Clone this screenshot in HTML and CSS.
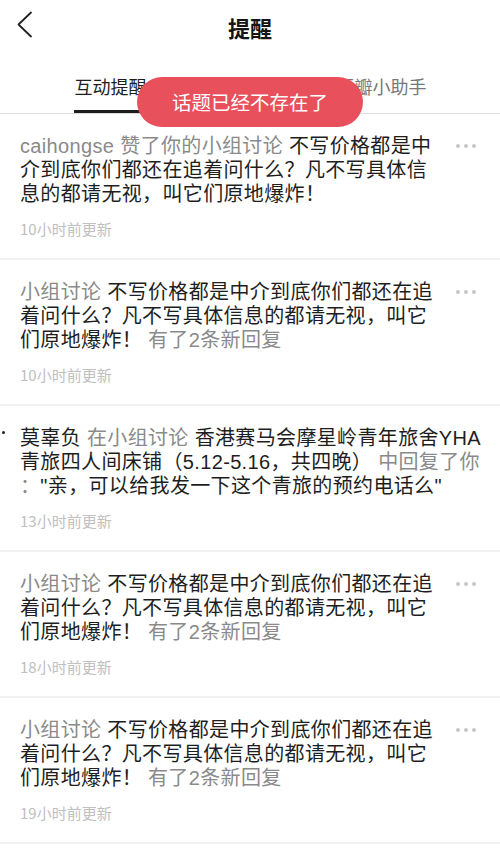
FILE: index.html
```html
<!DOCTYPE html>
<html lang="zh-CN">
<head>
<meta charset="utf-8">
<title>提醒</title>
<link rel="stylesheet" href="styles.css">
</head>
<body>
<div class="page">
  <header class="navbar">
    <span class="back">
      <svg width="18" height="28" viewBox="0 0 18 28"><path d="M15 1.5 L2.5 13.5 L15 25.5" fill="none" stroke="#222" stroke-width="1.8" stroke-linecap="round" stroke-linejoin="round"/></svg>
    </span>
    <h1 class="title">提醒</h1>
  </header>
  <nav class="tabs">
    <span class="tab active">互动提醒</span>
    <span class="tab">豆瓣小助手</span>
  </nav>

  <ul class="list">
    <li class="item">
      <div class="body">
        <p class="text"><span class="meta">caihongse 赞了你的小组讨论</span> 不写价格都是中<br>介到底你们都还在追着问什么？凡不写具体信<br>息的都请无视，叫它们原地爆炸！</p>
        <p class="time">10小时前更新</p>
      </div>
      <span class="more"><i></i><i></i><i></i></span>
    </li>
    <li class="item">
      <div class="body">
        <p class="text"><span class="meta">小组讨论</span> 不写价格都是中介到底你们都还在追<br>着问什么？凡不写具体信息的都请无视，叫它<br>们原地爆炸！ <span class="meta">有了2条新回复</span></p>
        <p class="time">10小时前更新</p>
      </div>
      <span class="more"><i></i><i></i><i></i></span>
    </li>
    <li class="item">
      <span class="unread"></span>
      <div class="body">
        <p class="text">莫辜负 <span class="meta">在小组讨论</span> 香港赛马会摩星岭青年旅舍YHA<br>青旅四人间床铺（5.12-5.16，共四晚） <span class="meta">中回复了你</span><br><span class="meta">：</span>"亲，可以给我发一下这个青旅的预约电话么"</p>
        <p class="time">13小时前更新</p>
      </div>
    </li>
    <li class="item">
      <div class="body">
        <p class="text"><span class="meta">小组讨论</span> 不写价格都是中介到底你们都还在追<br>着问什么？凡不写具体信息的都请无视，叫它<br>们原地爆炸！ <span class="meta">有了2条新回复</span></p>
        <p class="time">18小时前更新</p>
      </div>
      <span class="more"><i></i><i></i><i></i></span>
    </li>
    <li class="item">
      <div class="body">
        <p class="text"><span class="meta">小组讨论</span> 不写价格都是中介到底你们都还在追<br>着问什么？凡不写具体信息的都请无视，叫它<br>们原地爆炸！ <span class="meta">有了2条新回复</span></p>
        <p class="time">19小时前更新</p>
      </div>
      <span class="more"><i></i><i></i><i></i></span>
    </li>
    <li class="item">
      <div class="body">
        <p class="text"><span class="meta">小组讨论</span> 不写价格都是中介到底你们都还在追</p>
      </div>
    </li>
  </ul>

  <div class="toast">话题已经不存在了</div>
</div>
</body>
</html>
```

FILE: styles.css
```css
* { box-sizing: border-box; }
html, body {
  margin: 0;
  padding: 0;
  background: #fff;
}
body {
  font-family: "Liberation Sans", "Noto Sans CJK SC", sans-serif;
  color: #1e1e1e;
  width: 500px;
  height: 860px;
  overflow: hidden;
}
.page {
  position: relative;
  width: 500px;
}
.navbar {
  height: 54px;
  display: flex;
  align-items: center;
  justify-content: center;
  position: relative;
}
.back {
  position: absolute;
  left: 16px;
  top: 11px;
  width: 18px;
  height: 28px;
  display: block;
}
.back svg { display: block; }
.title {
  margin: 0;
  font-family: "Noto Sans CJK SC", sans-serif;
  font-size: 22px;
  font-weight: 700;
  line-height: 30px;
  color: #151515;
  padding-top: 0;
}
.tabs {
  display: flex;
  justify-content: center;
  gap: 189px;
  height: 60px;
  border-bottom: 1px solid #dcdcdc;
}
.tab {
  font-family: "Noto Sans CJK SC", sans-serif;
  font-size: 18px;
  line-height: 24px;
  padding-top: 20px;
  color: #777;
  height: 59px;
  padding-left: 1px;
}
.tab.active {
  color: #1e1e1e;
  border-bottom: 3px solid #1e1e1e;
}
.list {
  list-style: none;
  margin: 0;
  padding: 0;
}
.item {
  position: relative;
  display: flex;
  align-items: flex-start;
  padding: 20px 24px 19px 20px;
  border-bottom: 2px solid #f2f2f2;
}
.body {
  flex: 1;
  min-width: 0;
}
.text {
  margin: 0;
  font-size: 20px;
  letter-spacing: 0.35px;
  line-height: 24px;
  white-space: nowrap;
  color: #1e1e1e;
}
.meta {
  color: #8a8a8a;
}
.time {
  margin: 13px 0 0;
  font-family: "Noto Sans CJK SC", sans-serif;
  font-size: 15px;
  line-height: 20px;
  color: #c0c0c0;
}
.more {
  height: 24px;
  width: 20px;
  display: flex;
  align-items: center;
  justify-content: space-between;
  flex-shrink: 0;
}
.more i {
  width: 4px;
  height: 4px;
  border-radius: 50%;
  background: #c8c8c8;
  display: block;
}
.unread {
  position: absolute;
  left: 2px;
  top: 25px;
  width: 3px;
  height: 3px;
  border-radius: 50%;
  background: #222;
}
.toast {
  position: absolute;
  top: 77px;
  left: 137px;
  width: 226px;
  height: 50px;
  border-radius: 25px;
  background: #e8505b;
  color: #fff;
  font-family: "Noto Sans CJK SC", sans-serif;
  font-size: 19.5px;
  line-height: 50px;
  text-align: center;
}
```
